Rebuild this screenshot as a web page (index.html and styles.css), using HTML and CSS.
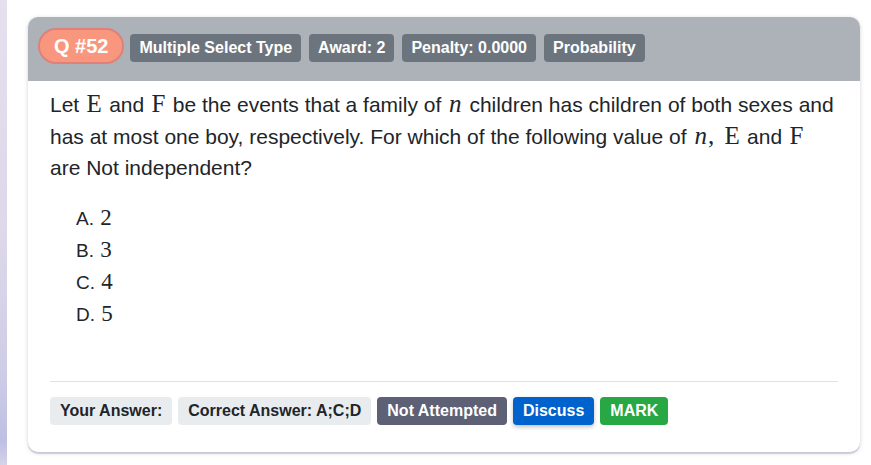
FILE: index.html
```html
<!DOCTYPE html>
<html>
<head>
<meta charset="utf-8">
<link rel="stylesheet" href="styles.css">
</head>
<body>
<div class="page">
  <div class="card">
    <div class="card-header">
      <span class="qnum">Q #52</span>
      <span class="tag">Multiple Select Type</span>
      <span class="tag">Award: 2</span>
      <span class="tag">Penalty: 0.0000</span>
      <span class="tag">Probability</span>
    </div>
    <div class="card-body">
      <p class="question">Let <span class="rm">E</span> and <span class="rm">F</span> be the events that a family of <span class="mi">n</span> children has children of both sexes and has at most one boy, respectively. For which of the following value of <span class="mi tight">n</span><span class="rm comma">,</span> <span class="rm">E</span> and <span class="rm">F</span> are Not independent?</p>
      <ul class="options">
        <li>A. <span class="num">2</span></li>
        <li>B. <span class="num">3</span></li>
        <li>C. <span class="num">4</span></li>
        <li>D. <span class="num">5</span></li>
      </ul>
      <hr class="sep">
      <div class="footer">
        <span class="fbadge light">Your Answer:</span>
        <span class="fbadge light">Correct Answer: A;C;D</span>
        <span class="fbadge dark">Not Attempted</span>
        <span class="fbadge blue">Discuss</span>
        <span class="fbadge green">MARK</span>
      </div>
    </div>
  </div>
</div>
</body>
</html>
```

FILE: styles.css
```css
html, body {
  margin: 0;
  padding: 0;
  height: 100%;
}
body {
  background:
    linear-gradient(to bottom, #e4e0ee 0%, #ddd8ea 50%, #cfcce6 80%, #bdbfe4 95%, #d6d4ea 100%) left top / 7px 100% no-repeat,
    #ffffff;
  font-family: "Liberation Sans", Arial, sans-serif;
  color: #212529;
}
.page {
  padding: 17px 11px 0 28px;
}
.card {
  width: 832px;
  background: #fff;
  border-radius: 10px;
  overflow: hidden;
  box-shadow: 0 1px 4px rgba(0,0,0,0.18), 0 2px 0 #dfe1f1;
}
.card-header {
  background: #adb1b8;
  height: 64px;
  box-sizing: border-box;
  padding: 11px 10px 0 10px;
  display: flex;
  align-items: baseline;
  gap: 8px;
}
.qnum {
  display: inline-block;
  background: #f8977d;
  border: 2px solid #de8178;
  color: #fff;
  font-weight: bold;
  font-size: 20px;
  line-height: 32px;
  padding: 0 14px;
  border-radius: 18px;
  margin-right: -2px;
}
.tag {
  display: inline-block;
  background: #6c757d;
  color: #fff;
  font-weight: bold;
  font-size: 16px;
  line-height: 28px;
  padding: 0 9px;
  border-radius: 4px;
}
.card-body {
  padding: 8px 22px 27px 22px;
}
.question {
  margin: 0;
  font-size: 21px;
  line-height: 31.5px;
}
.rm {
  font-family: "Liberation Serif", serif;
  font-size: 25px;
  line-height: 1;
  margin: 0 1.5px;
}
.rm.comma {
  margin: 0 3px 0 0;
}
.mi {
  font-family: "Liberation Serif", serif;
  font-style: italic;
  font-size: 25px;
  line-height: 1;
  margin: 0 2px;
}
.mi.tight {
  margin-right: 1px;
}
.options {
  list-style: none;
  margin: 19px 0 0 0;
  padding: 0 0 0 26px;
  font-size: 19px;
  line-height: 32px;
}
.num {
  font-family: "Liberation Serif", serif;
  font-size: 23px;
  line-height: 1;
  margin-left: 1px;
}
.sep {
  border: 0;
  border-top: 1px solid #dee2e6;
  margin: 50px 0 15px 0;
}
.footer {
  display: flex;
  gap: 6px;
}
.fbadge {
  display: inline-block;
  font-weight: bold;
  font-size: 16px;
  line-height: 28px;
  padding: 0 10px;
  border-radius: 4px;
}
.light {
  background: #e9ecef;
  color: #212529;
}
.dark {
  background: #5e6076;
  color: #fff;
}
.blue {
  background: #0062cc;
  color: #fff;
  box-shadow: 0 2px 4px rgba(0,0,0,0.25);
}
.green {
  background: #28a745;
  color: #fff;
}
```
